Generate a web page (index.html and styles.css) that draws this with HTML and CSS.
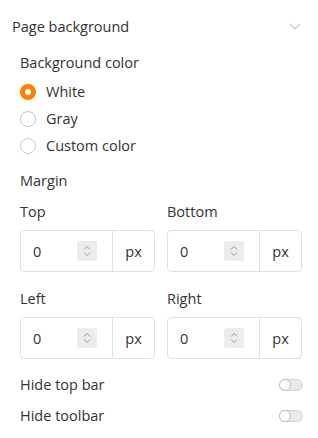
FILE: index.html
```html
<!DOCTYPE html>
<html>
<head>
<meta charset="utf-8">
<link rel="stylesheet" href="styles.css">
</head>
<body>
<div class="panel">
  <div class="header">
    <span class="title">Page background</span>
    <svg class="chevron" width="12" height="7" viewBox="0 0 12 7"><path d="M1 1l5 5 5-5" fill="none" stroke="#c9c9c9" stroke-width="1.2"/></svg>
  </div>
  <div class="body">
    <div class="label">Background color</div>
    <div class="radios">
      <div class="radio-row"><span class="radio checked"></span><span>White</span></div>
      <div class="radio-row"><span class="radio"></span><span>Gray</span></div>
      <div class="radio-row"><span class="radio"></span><span>Custom color</span></div>
    </div>
    <div class="label margin-label">Margin</div>
    <div class="grid">
      <div class="field">
        <div class="label">Top</div>
        <div class="input"><span class="value">0</span><span class="spin"><svg width="10" height="14" viewBox="0 0 10 14"><path d="M2 5.5L5 2.5l3 3M2 8.5L5 11.5l3-3" fill="none" stroke="#9a9a9a" stroke-width="1"/></svg></span><span class="unit">px</span></div>
      </div>
      <div class="field">
        <div class="label">Bottom</div>
        <div class="input"><span class="value">0</span><span class="spin"><svg width="10" height="14" viewBox="0 0 10 14"><path d="M2 5.5L5 2.5l3 3M2 8.5L5 11.5l3-3" fill="none" stroke="#9a9a9a" stroke-width="1"/></svg></span><span class="unit">px</span></div>
      </div>
      <div class="field">
        <div class="label">Left</div>
        <div class="input"><span class="value">0</span><span class="spin"><svg width="10" height="14" viewBox="0 0 10 14"><path d="M2 5.5L5 2.5l3 3M2 8.5L5 11.5l3-3" fill="none" stroke="#9a9a9a" stroke-width="1"/></svg></span><span class="unit">px</span></div>
      </div>
      <div class="field">
        <div class="label">Right</div>
        <div class="input"><span class="value">0</span><span class="spin"><svg width="10" height="14" viewBox="0 0 10 14"><path d="M2 5.5L5 2.5l3 3M2 8.5L5 11.5l3-3" fill="none" stroke="#9a9a9a" stroke-width="1"/></svg></span><span class="unit">px</span></div>
      </div>
    </div>
    <div class="switches">
      <div class="switch-row"><span>Hide top bar</span><span class="toggle"></span></div>
      <div class="switch-row"><span>Hide toolbar</span><span class="toggle"></span></div>
    </div>
  </div>
</div>
</body>
</html>
```
FILE: styles.css
```css
html, body {
  margin: 0;
  background: #fff;
}
body {
  font-family: "Open Sans", "Noto Sans", sans-serif;
  color: #333;
  font-size: 14.5px;
}
.panel {
  width: 318px;
}
.header {
  height: 53px;
  display: flex;
  align-items: center;
  justify-content: space-between;
  padding: 0 17px 0 12px;
  box-sizing: border-box;
}
.title {
  font-size: 14.5px;
  color: #333;
}
.chevron {
  display: block;
}
.body {
  padding: 0 16px 0 20px;
}
.label {
  height: 20px;
  line-height: 20px;
}
.radios {
  margin-top: 5px;
}
.radio-row {
  height: 27px;
  display: flex;
  align-items: center;
  gap: 10px;
}
.radio {
  width: 16px;
  height: 16px;
  box-sizing: border-box;
  border: 1px solid #c6c6c6;
  border-radius: 50%;
  background: #fff;
  flex: none;
}
.radio.checked {
  border: 5px solid #ff8000;
}
.margin-label {
  margin-top: 12px;
}
.grid {
  margin-top: 11px;
  display: grid;
  grid-template-columns: 1fr 1fr;
  column-gap: 12px;
  row-gap: 17px;
}
.field .label {
  margin-bottom: 8px;
}
.input {
  height: 42px;
  box-sizing: border-box;
  border: 1px solid #e0e0e0;
  border-radius: 4px;
  display: flex;
  align-items: center;
}
.value {
  flex: 1;
  padding-left: 12px;
}
.spin {
  width: 20px;
  height: 20px;
  background: #ececec;
  border-radius: 2px;
  display: flex;
  align-items: center;
  justify-content: center;
  margin-right: 15px;
}
.spin svg {
  display: block;
}
.unit {
  width: 41px;
  align-self: stretch;
  border-left: 1px solid #e0e0e0;
  display: flex;
  align-items: center;
  justify-content: center;
}
.switches {
  margin-top: 10px;
}
.switch-row {
  height: 31px;
  display: flex;
  align-items: center;
  justify-content: space-between;
}
.toggle {
  width: 24px;
  height: 12px;
  box-sizing: border-box;
  border-radius: 6px;
  background: #e9e9e9;
  border: 1px solid #d6d6d6;
  position: relative;
  margin-right: -1px;
}
.toggle::after {
  content: "";
  position: absolute;
  left: -1px;
  top: -1px;
  width: 12px;
  height: 12px;
  box-sizing: border-box;
  border-radius: 50%;
  background: #fff;
  border: 1px solid #bdbdbd;
}
```
